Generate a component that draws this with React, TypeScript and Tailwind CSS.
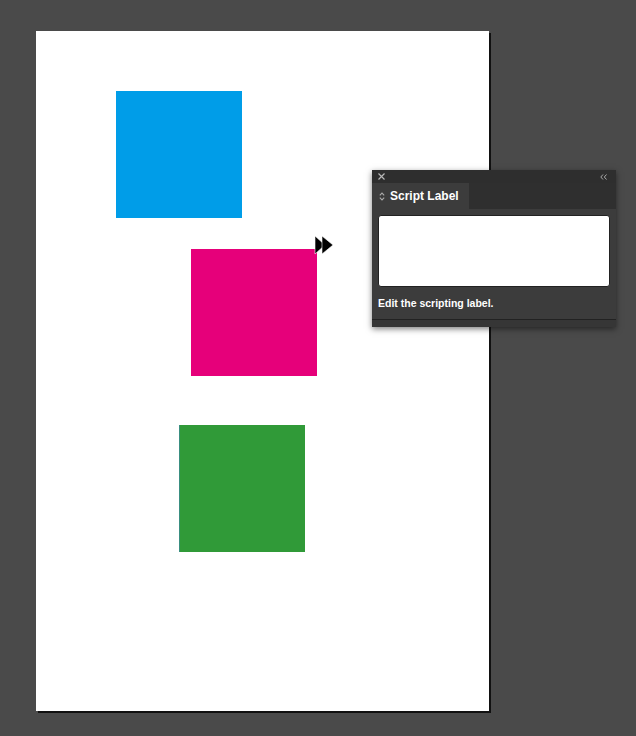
const App = () => {
  return (
    <div className="relative w-[636px] h-[736px] bg-[#4a4a4a] overflow-hidden" style={{ fontFamily: '"Liberation Sans", Arial, sans-serif' }}>
      {/* PAGE */}
      <div className="relative ml-[36px] pt-[31px]">
        <div className="relative w-[453px] h-[680px] bg-white shadow-[2px_2px_0_#111]">
          <div className="absolute left-[80px] top-[60px] w-[126px] h-[127px] bg-[#009de8]" />
          <div className="absolute left-[155px] top-[218px] w-[126px] h-[127px] bg-[#e6007a]" />
          <div className="absolute left-[143px] top-[394px] w-[126px] h-[127px] bg-[#309a38] border-l border-[#3a8f80]" />
        </div>
      </div>

      {/* CURSOR */}
      <svg className="absolute left-[312px] top-[234px]" width="24" height="22" viewBox="0 0 24 22">
        <polygon points="3,2 13,11 3,20" fill="#000" stroke="#fff" strokeWidth="0.6" />
        <polygon points="10,2 21,11 10,20" fill="#000" stroke="#fff" strokeWidth="0.6" />
      </svg>

      {/* SCRIPT LABEL PANEL */}
      <div className="absolute left-[372px] top-[170px] w-[244px] h-[157px] bg-[#3c3c3c] shadow-[0_2px_6px_rgba(0,0,0,0.5)] flex flex-col">
        <div className="h-[13px] bg-[#2e2e2e] flex items-center justify-between pl-[6px] pr-[9px]">
          <svg width="7" height="7" viewBox="0 0 7 7" stroke="#b8b8b8" strokeWidth="1.2">
            <path d="M0.5 0.5 L6.5 6.5 M6.5 0.5 L0.5 6.5" />
          </svg>
          <svg width="7" height="6" viewBox="0 0 7 6" fill="none" stroke="#a8a8a8" strokeWidth="1">
            <path d="M3 0.5 L0.8 3 L3 5.5 M6.5 0.5 L4.3 3 L6.5 5.5" />
          </svg>
        </div>
        <div className="h-[26px] bg-[#2f2f2f] flex">
          <div className="w-[97px] bg-[#3c3c3c] flex items-center gap-[5px] pl-[7px]">
            <svg width="6" height="9" viewBox="0 0 6 9" fill="none" stroke="#aaa" strokeWidth="1.1">
              <path d="M0.8 3.3 L3 1 L5.2 3.3" />
              <path d="M0.8 5.7 L3 8 L5.2 5.7" />
            </svg>
            <span className="text-white text-[12px] font-bold">Script Label</span>
          </div>
        </div>
        <div className="px-[6px] pt-[6px]">
          <div className="h-[72px] bg-white rounded-[3px] border border-[#222]" />
          <div className="mt-[11px] text-white text-[10.5px] font-bold leading-none">Edit the scripting label.</div>
        </div>
        <div className="mt-auto h-[8px] border-t border-[#222] bg-[#363636]" />
      </div>
    </div>
  );
};

export default App
